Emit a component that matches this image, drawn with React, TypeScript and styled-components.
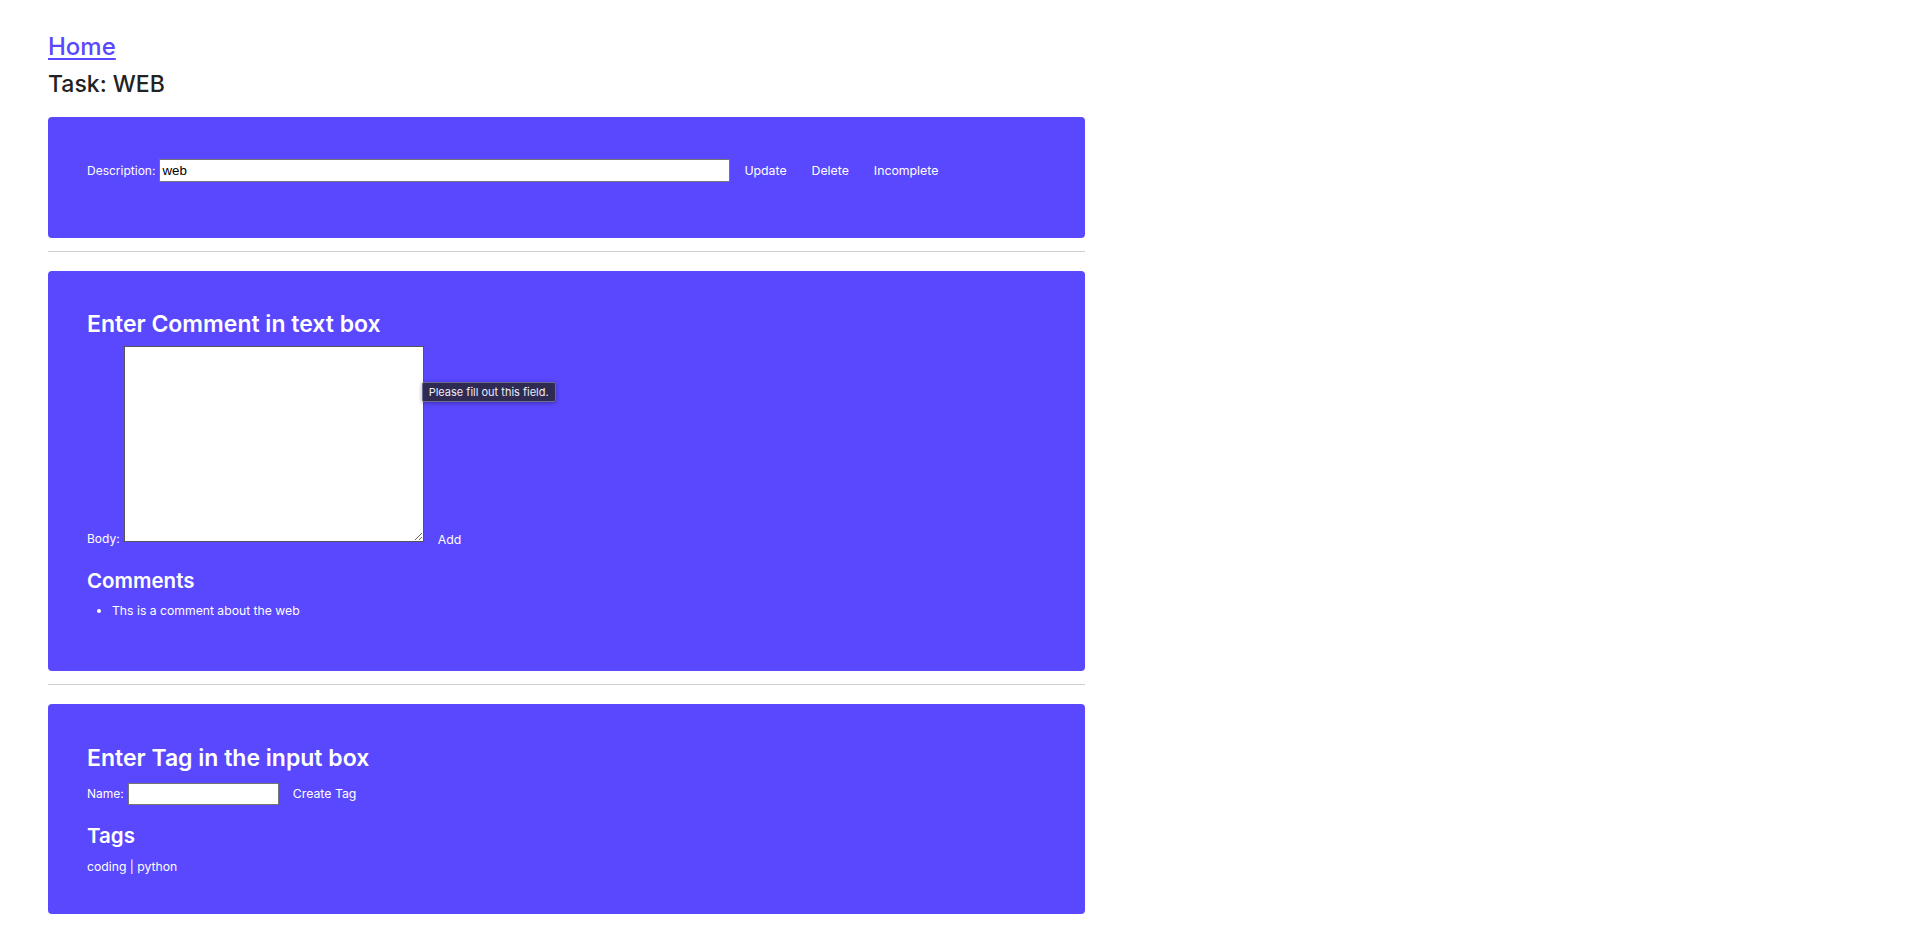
import styled, { createGlobalStyle } from "styled-components";

const GlobalStyle = createGlobalStyle`
  body {
    margin: 0;
    background-color: #ffffff;
    font-family: Inter, "Noto Sans", sans-serif;
    color: #222222;
  }
`;

const Page = styled.div`
  width: 1037px;
  padding: 31px 0 40px 48px;
`;

const HomeLink = styled.a`
  display: block;
  width: fit-content;
  font-size: 24px;
  line-height: 31px;
  font-weight: 500;
  color: #5a48fe;
  text-decoration: underline;
  text-underline-offset: 3px;
  text-decoration-thickness: 2px;
`;

const TaskTitle = styled.h2`
  margin: 8px 0 18px;
  font-size: 23px;
  line-height: 29px;
  font-weight: 500;
  color: #222222;
`;

const Panel = styled.section<{ $pad: string }>`
  background-color: #5a48fe;
  border-radius: 4px;
  padding: ${(props) => props.$pad};
  color: #ffffff;
`;

const Divider = styled.hr`
  margin: 13px 0 19px;
  border: none;
  border-top: 1px solid #cfcfcf;
`;

const FormRow = styled.div<{ $align?: string }>`
  display: flex;
  align-items: ${(props) => props.$align || "baseline"};
`;

const Label = styled.label<{ $drop?: number }>`
  font-size: 12px;
  line-height: 16px;
  margin-bottom: ${(props) => (props.$drop ? `-${props.$drop}px` : "0")};
`;

const TextInput = styled.input<{ $w: number; $h: number }>`
  box-sizing: border-box;
  width: ${(props) => props.$w}px;
  height: ${(props) => props.$h}px;
  margin-left: 4px;
  padding: 1px 2px;
  border: 1px solid #767676;
  border-radius: 0;
  background: #ffffff;
  font-family: "Liberation Sans", Arial, sans-serif;
  font-size: 13.3px;
  color: #000000;
`;

const TextAreaWrap = styled.div`
  position: relative;
  margin-left: 4px;
  display: flex;
`;

const BodyArea = styled.textarea`
  box-sizing: border-box;
  width: 300px;
  height: 196px;
  border: 1px solid #555555;
  border-radius: 0;
  background: #ffffff;
  resize: both;
  font-family: "Liberation Mono", monospace;
`;

const Tooltip = styled.div`
  position: absolute;
  left: 298px;
  top: 36px;
  white-space: nowrap;
  padding: 2px 6px;
  background-color: #2e2a52;
  border: 1px solid #6d6a95;
  border-radius: 2px;
  box-shadow: 0 1px 4px rgba(0, 0, 0, 0.35);
  font-size: 11px;
  line-height: 14px;
  color: #ececf4;
`;

const TextButton = styled.button<{ $drop?: number }>`
  margin-left: 4px;
  padding: 0 11px 0 10px;
  border: none;
  background: transparent;
  font-family: Inter, "Noto Sans", sans-serif;
  font-size: 12.3px;
  line-height: 16px;
  color: #ffffff;
  cursor: pointer;
  margin-bottom: ${(props) => (props.$drop ? `-${props.$drop + 1}px` : "0")};
`;

const SectionTitle = styled.h3<{ $size: number; $gap: string }>`
  margin: ${(props) => props.$gap};
  font-size: ${(props) => props.$size}px;
  line-height: 1.2;
  font-weight: 600;
  color: #ffffff;
`;

const CommentList = styled.ul`
  margin: 10px 0 0;
  padding-left: 25px;
  font-size: 12.2px;
  line-height: 16px;
`;

const TagLine = styled.p`
  margin: 11px 0 0;
  font-size: 12.2px;
  line-height: 16px;
`;

const comments = ["Ths is a comment about the web"];
const tags = ["coding", "python"];

export default function App() {
  return (
    <>
      <GlobalStyle />
      <Page>
        <HomeLink href="#">Home</HomeLink>
        <TaskTitle>Task: WEB</TaskTitle>

        {/* 설명 수정 */}
        <Panel $pad="42px 39px 56px">
          <FormRow>
            <Label>Description:</Label>
            <TextInput $w={571} $h={23} defaultValue="web" />
            <TextButton>Update</TextButton>
            <TextButton>Delete</TextButton>
            <TextButton>Incomplete</TextButton>
          </FormRow>
        </Panel>

        <Divider />

        {/* 댓글 */}
        <Panel $pad="40px 39px 52px">
          <SectionTitle $size={23} $gap="0 0 7px">
            Enter Comment in text box
          </SectionTitle>
          <FormRow $align="flex-end">
            <Label $drop={5}>Body:</Label>
            <TextAreaWrap>
              <BodyArea />
              <Tooltip>Please fill out this field.</Tooltip>
            </TextAreaWrap>
            <TextButton $drop={5}>Add</TextButton>
          </FormRow>
          <SectionTitle $size={20.5} $gap="27px 0 0">
            Comments
          </SectionTitle>
          <CommentList>
            {comments.map((comment) => (
              <li key={comment}>{comment}</li>
            ))}
          </CommentList>
        </Panel>

        <Divider />

        {/* 태그 */}
        <Panel $pad="41px 39px 39px">
          <SectionTitle $size={23} $gap="0 0 10px">
            Enter Tag in the input box
          </SectionTitle>
          <FormRow>
            <Label>Name:</Label>
            <TextInput $w={151} $h={22} />
            <TextButton>Create Tag</TextButton>
          </FormRow>
          <SectionTitle $size={20.5} $gap="19px 0 0">
            Tags
          </SectionTitle>
          <TagLine>{tags.join(" | ")}</TagLine>
        </Panel>
      </Page>
    </>
  );
}
